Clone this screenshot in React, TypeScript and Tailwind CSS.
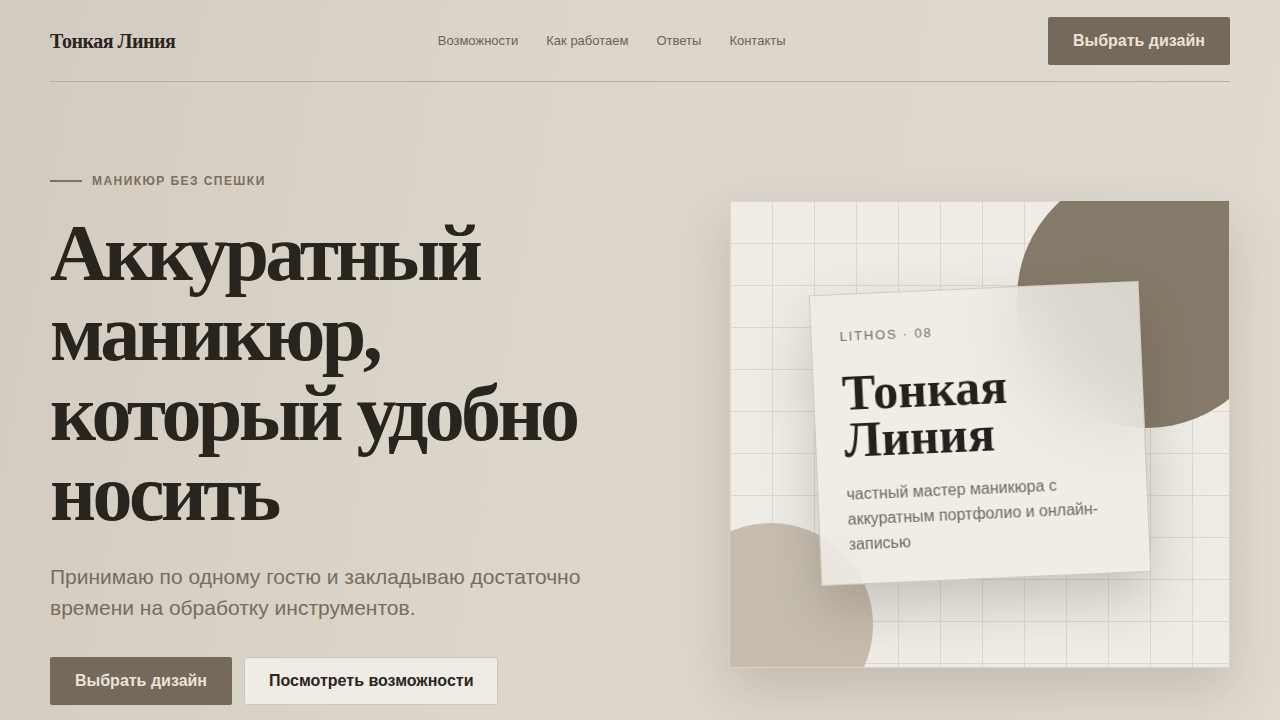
import React from 'react';

const navLinks = ['Возможности', 'Как работаем', 'Ответы', 'Контакты'];

const serif = { fontFamily: '"Liberation Serif", "Times New Roman", serif' };

const Header = () => (
  <header className="flex items-center justify-between border-b border-[#b8afa3] pt-[17px] pb-4">
    <a className="text-[20px] font-bold tracking-[-0.025em] text-[#2a2520]" style={serif}>
      Тонкая Линия
    </a>
    <nav className="flex items-center gap-7">
      {navLinks.map((link) => (
        <a key={link} className="text-[13px] text-[#6b6358]">
          {link}
        </a>
      ))}
    </nav>
    <button className="h-12 rounded-[2px] bg-[#74695a] px-[25px] text-[16px] font-bold text-[#ebe3d7]">
      Выбрать дизайн
    </button>
  </header>
);

const HeroText = () => (
  <div className="flex flex-col">
    <div className="flex items-center gap-[10px]">
      <span className="h-[2px] w-8 bg-[#7a6f60]" />
      <span className="text-[12px] font-bold uppercase leading-4 tracking-[0.12em] text-[#7a6f60]">
        Маникюр без спешки
      </span>
    </div>
    <h1
      className="mt-6 max-w-[590px] text-[80px] font-bold leading-[80px] tracking-[-0.045em] text-[#28241e]"
      style={serif}
    >
      Аккуратный маникюр, который удобно носить
    </h1>
    <p className="mt-7 max-w-[580px] text-[21px] leading-[31px] text-[#766d62]">
      Принимаю по одному гостю и закладываю достаточно времени на обработку инструментов.
    </p>
    <div className="mt-[34px] flex gap-3">
      <button className="h-12 rounded-[2px] bg-[#74695a] px-[25px] text-[16px] font-bold text-[#ebe3d7]">
        Выбрать дизайн
      </button>
      <button className="h-12 rounded-[2px] border border-[#cfc6ba] bg-[#efebe5] px-[24px] text-[16px] font-bold text-[#2a2520]">
        Посмотреть возможности
      </button>
    </div>
  </div>
);

const Showcase = () => (
  <div className="relative mb-[11px] flex h-[468px] w-[501px] items-center justify-center overflow-hidden border border-[#d9d1c6] bg-[#efebe5] bg-[linear-gradient(to_right,#ddd6cc_1px,transparent_1px),linear-gradient(to_bottom,#ddd6cc_1px,transparent_1px)] bg-[size:42px_42px] shadow-[0_22px_50px_rgba(70,58,44,0.18)]">
    <div className="absolute -right-[48px] -top-[33px] h-[260px] w-[260px] rounded-full bg-[#857a69]" />
    <div className="absolute -left-[61px] top-[322px] h-[204px] w-[204px] rounded-full bg-[#c6bdaf]" />
    <div className="relative w-[330px] rotate-[-2.5deg] border border-[#d3cabe] bg-[#f0ece6]/80 pl-[28px] pr-[30px] pb-[27px] pt-[34px] shadow-[0_24px_50px_rgba(60,50,40,0.22)] backdrop-blur-2xl">
      <div className="text-[13px] leading-4 tracking-[0.14em] text-[#6f675c]">LITHOS · 08</div>
      <div className="mt-[25px] text-[50px] font-bold leading-[47px] text-[#24201b]" style={serif}>
        Тонкая Линия
      </div>
      <p className="mt-[18px] text-[16px] leading-[25px] text-[#6e665b]">
        частный мастер маникюра с аккуратным портфолио и онлайн-записью
      </p>
    </div>
  </div>
);

export default function App() {
  return (
    <div
      className="min-h-[720px] w-full bg-[linear-gradient(100deg,#d3cbc0_0%,#dcd5ca_40%,#e1dad0_100%)]"
      style={{ fontFamily: '"Liberation Sans", Arial, sans-serif' }}
    >
      <div className="mx-auto w-[1180px]">
        <Header />
        <main className="grid grid-cols-[1fr_501px] items-center pt-[91px]">
          <HeroText />
          <Showcase />
        </main>
      </div>
    </div>
  );
}
